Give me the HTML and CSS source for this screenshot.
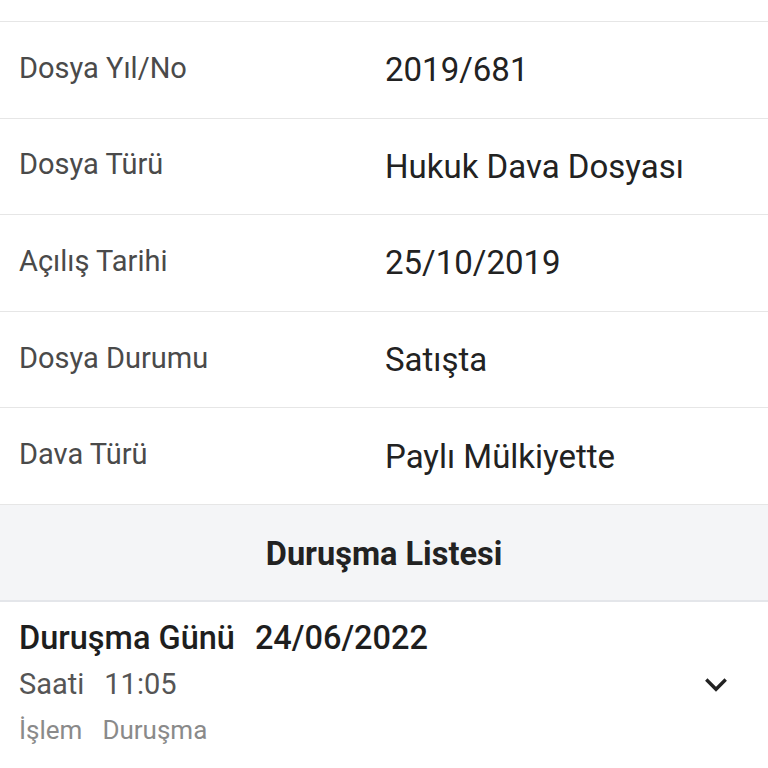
FILE: index.html
```html
<!DOCTYPE html>
<html lang="tr">
<head>
    <meta charset="UTF-8">
    <meta name="viewport" content="width=device-width, initial-scale=1.0">
    <title>Dosya Detayı</title>
    <link rel="stylesheet" href="styles.css">
</head>
<body>
    <div class="file-detail">
        <div class="top-spacer"></div>

        <!-- Dosya bilgileri -->
        <div class="info-list">
            <div class="info-row">
                <span class="info-label">Dosya Yıl/No</span>
                <span class="info-value">2019/681</span>
            </div>
            <div class="info-row">
                <span class="info-label">Dosya Türü</span>
                <span class="info-value">Hukuk Dava Dosyası</span>
            </div>
            <div class="info-row">
                <span class="info-label">Açılış Tarihi</span>
                <span class="info-value">25/10/2019</span>
            </div>
            <div class="info-row">
                <span class="info-label">Dosya Durumu</span>
                <span class="info-value">Satışta</span>
            </div>
            <div class="info-row">
                <span class="info-label">Dava Türü</span>
                <span class="info-value">Paylı Mülkiyette</span>
            </div>
        </div>

        <!-- Duruşma listesi -->
        <div class="section-header">Duruşma Listesi</div>

        <div class="hearing-item">
            <div class="hearing-text">
                <div class="hearing-line hearing-date">
                    <span>Duruşma Günü</span>
                    <span>24/06/2022</span>
                </div>
                <div class="hearing-line hearing-time">
                    <span>Saati</span>
                    <span>11:05</span>
                </div>
                <div class="hearing-line hearing-action">
                    <span>İşlem</span>
                    <span>Duruşma</span>
                </div>
            </div>
            <svg class="hearing-chevron" viewBox="0 0 24 24" width="34" height="34">
                <path d="M6 9 L12 15 L18 9" fill="none" stroke="#222" stroke-width="2.4" stroke-linecap="square"/>
            </svg>
        </div>
    </div>
</body>
</html>
```

FILE: styles.css
```css
body {
    margin: 0;
    background: #fff;
    font-family: Roboto, "Noto Sans", sans-serif;
    color: #222;
    overflow: hidden;
}

.file-detail {
    width: 100%;
    display: flex;
    flex-direction: column;
}

.top-spacer {
    height: 21px;
    border-bottom: 1px solid #e6e6e6;
}

/* Dosya bilgileri */
.info-row {
    height: 96.6px;
    box-sizing: border-box;
    border-bottom: 1px solid #e6e6e6;
    display: flex;
    align-items: center;
    padding: 0 19px;
}
.info-label {
    width: 366px;
    font-size: 29px;
    color: #4a4a4a;
    padding-bottom: 4px;
}
.info-value {
    font-size: 33px;
    color: #222;
}

/* Duruşma listesi */
.section-header {
    height: 97px;
    box-sizing: border-box;
    padding-top: 3px;
    background: #f4f5f7;
    border-bottom: 2px solid #e4e6ea;
    display: flex;
    align-items: center;
    justify-content: center;
    font-size: 32.5px;
    font-weight: 700;
    color: #222;
}

.hearing-item {
    display: flex;
    align-items: center;
    justify-content: space-between;
    padding: 14px 35px 0 19px;
}
.hearing-line {
    display: flex;
    gap: 20px;
}
.hearing-date {
    font-size: 32.5px;
    font-weight: 500;
    color: #1e1e1e;
    line-height: 44px;
}
.hearing-time {
    font-size: 29px;
    color: #555;
    line-height: 48px;
}
.hearing-action {
    font-size: 26px;
    color: #8a8a8a;
    line-height: 44px;
}
.hearing-chevron {
    flex-shrink: 0;
    margin-top: 2px;
}
```
